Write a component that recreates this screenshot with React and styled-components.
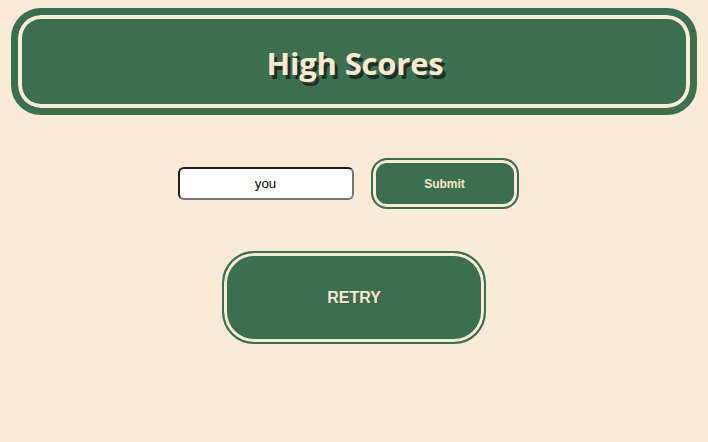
import React from 'react';
import styled, { createGlobalStyle } from 'styled-components';

const GlobalStyle = createGlobalStyle`
  html, body {
    margin: 0;
    padding: 0;
    background: #faebd7;
  }
  body {
    font-family: "Liberation Sans", Arial, sans-serif;
    min-height: 100vh;
  }
`;

const Page = styled.div`
  display: flex;
  flex-direction: column;
  align-items: center;
  padding-top: 8px;
`;

const Banner = styled.header`
  box-sizing: border-box;
  width: 97%;
  height: 107px;
  display: flex;
  align-items: center;
  justify-content: center;
  background: #3c6e50;
  border: 7px solid #3c6e50;
  border-radius: 30px;
  box-shadow: inset 0 0 0 4px #faebd7;
`;

const Title = styled.h1`
  margin: 0 0 0 2px;
  padding-top: 2px;
  font-family: "Open Sans", "Noto Sans", sans-serif;
  font-weight: 700;
  font-size: 31px;
  letter-spacing: -0.2px;
  color: #fbe8d2;
  text-shadow: 3px 4px 0 #1c3124;
`;

const NameRow = styled.div`
  display: flex;
  align-items: center;
  gap: 17px;
  margin-top: 43px;
  padding-right: 12px;
`;

const NameInput = styled.input`
  box-sizing: border-box;
  width: 176px;
  height: 33px;
  border: 2px solid;
  border-color: #1f1f1f #767676 #767676 #1f1f1f;
  border-radius: 6px;
  background: #fff;
  text-align: center;
  font-family: "Liberation Sans", Arial, sans-serif;
  font-size: 13.3px;
  color: #000;
  outline: none;
`;

const GreenButton = styled.button`
  box-sizing: border-box;
  width: ${p => p.$w}px;
  height: ${p => p.$h}px;
  background: #3c6e50;
  border: 2px solid #3c6e50;
  border-radius: ${p => p.$r}px;
  box-shadow: inset 0 0 0 3px #faebd7;
  color: #fbe8d2;
  font-family: "Liberation Sans", Arial, sans-serif;
  font-weight: 700;
  font-size: ${p => p.$fs}px;
  cursor: pointer;
`;

const RetryButton = styled(GreenButton)`
  margin-top: 42px;
  text-shadow: 1px 1px 0 rgba(0, 0, 0, 0.15);
`;

export default function App() {
  return (
    <>
      <GlobalStyle />
      <Page>
        <Banner>
          <Title>High Scores</Title>
        </Banner>
        <NameRow>
          <NameInput defaultValue="you" />
          <GreenButton $w={148} $h={51} $r={16} $fs={12}>Submit</GreenButton>
        </NameRow>
        <RetryButton $w={264} $h={93} $r={32} $fs={16}>RETRY</RetryButton>
      </Page>
    </>
  );
}
